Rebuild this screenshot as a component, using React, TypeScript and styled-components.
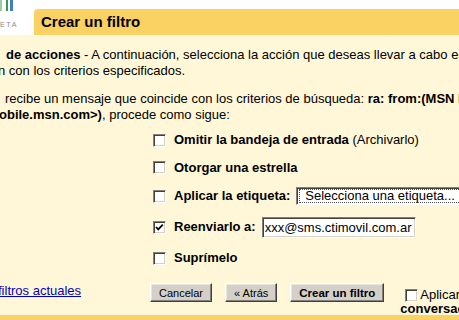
import styled, { createGlobalStyle } from 'styled-components'

const GlobalStyle = createGlobalStyle`
  html, body {
    margin: 0;
    padding: 0;
    background: #fff;
  }
  body {
    font-family: "Liberation Sans", Arial, sans-serif;
    font-size: 13px;
    color: #000;
  }
`

function Checkbox({ checked = false }: { checked?: boolean }) {
  return (
    <Box>
      {checked && (
        <svg width="9" height="9" viewBox="0 0 9 9">
          <path d="M1 4 L3.2 6.4 L7.8 1.6" fill="none" stroke="#000" strokeWidth="1.7" />
        </svg>
      )}
    </Box>
  )
}

export default function App() {
  return (
    <>
      <GlobalStyle />
      <Page>
        <TopBar>
          <LogoCell>
            <svg width="14" height="11" viewBox="0 0 14 11">
              <rect x="0" y="0" width="2" height="11" fill="#9cc9a8" />
              <rect x="6" y="0" width="2" height="11" fill="#3a9a4c" />
              <rect x="10" y="0" width="3" height="11" fill="#3d7fc4" />
            </svg>
            <BetaText>ETA</BetaText>
          </LogoCell>
          <Tab>Crear un filtro</Tab>
        </TopBar>

        <Panel>
          <Para>
            <Line $indent={6}>
              <b>de acciones</b> - A continuación, selecciona la acción que deseas llevar a cabo en los mensajes que
            </Line>
            <Line $indent={-2}>n con los criterios especificados.</Line>
          </Para>
          <Para>
            <Line $indent={5}>
              recibe un mensaje que coincide con los criterios de búsqueda: <b>ra: from:(MSN Mobile</b>
            </Line>
            <Line $indent={-1}>
              <b>obile.msn.com&gt;)</b>, procede como sigue:
            </Line>
          </Para>

          <ActionList>
            <ActionRow $h={28}>
              <Checkbox />
              <Label>
                <b>Omitir la bandeja de entrada</b> (Archivarlo)
              </Label>
            </ActionRow>
            <ActionRow $h={27}>
              <Checkbox />
              <Label>
                <b>Otorgar una estrella</b>
              </Label>
            </ActionRow>
            <ActionRow $h={30}>
              <Checkbox />
              <Label>
                <b>Aplicar la etiqueta:</b>
              </Label>
              <FakeSelect>
                <SelectText>Selecciona una etiqueta...</SelectText>
              </FakeSelect>
            </ActionRow>
            <ActionRow $h={32}>
              <Checkbox checked />
              <Label>
                <b>Reenviarlo a:</b>
              </Label>
              <TextInput readOnly value="xxx@sms.ctimovil.com.ar" />
            </ActionRow>
            <ActionRow $h={30}>
              <Checkbox />
              <Label>
                <b>Suprímelo</b>
              </Label>
            </ActionRow>
          </ActionList>

          <Footer>
            <LinkCell>
              <FilterLink href="#">filtros actuales</FilterLink>
            </LinkCell>
            <Buttons>
              <Btn>Cancelar</Btn>
              <Btn>« Atrás</Btn>
              <Btn $primary>Crear un filtro</Btn>
            </Buttons>
            <ApplyBlock>
              <ApplyLine>
                <Checkbox />
                <span>Aplicar el filtro también a las</span>
              </ApplyLine>
              <b>conversaciones que coinciden.</b>
            </ApplyBlock>
          </Footer>
        </Panel>
      </Page>
    </>
  )
}

const Page = styled.div`
  width: 459px;
  height: 320px;
  overflow: hidden;
`

const TopBar = styled.div`
  display: flex;
  height: 35px;
`

const LogoCell = styled.div`
  width: 34px;
  display: flex;
  flex-direction: column;
  svg {
    display: block;
  }
`

const BetaText = styled.div`
  margin-top: 10px;
  font-size: 7px;
  line-height: 7px;
  letter-spacing: 1.6px;
  color: #8a8a8a;
`

const Tab = styled.div`
  flex: 1;
  margin-top: 9px;
  height: 26px;
  background: #fad163;
  border-top-left-radius: 4px;
  padding-left: 7px;
  font-size: 15px;
  font-weight: bold;
  line-height: 26px;
`

const Panel = styled.div`
  height: 268px;
  padding-top: 12px;
  background: #fff7d7;
  border-bottom: 6px solid #fad163;
`

const Para = styled.div`
  & + & {
    margin-top: 12px;
  }
`

const Line = styled.div<{ $indent: number }>`
  margin-left: ${({ $indent }) => $indent}px;
  white-space: nowrap;
  line-height: 16px;
`

const ActionList = styled.div`
  margin-top: 3px;
  padding-left: 153px;
`

const ActionRow = styled.div<{ $h: number }>`
  height: ${({ $h }) => $h}px;
  display: flex;
  align-items: center;
  white-space: nowrap;
`

const Box = styled.span`
  box-sizing: border-box;
  width: 13px;
  height: 13px;
  flex: none;
  display: inline-flex;
  align-items: center;
  justify-content: center;
  background: #fff;
  border-style: solid;
  border-width: 1px;
  border-color: #808080 #fff #fff #808080;
  box-shadow: inset 1px 1px #404040, inset -1px -1px #d4d0c8;
`

const Label = styled.span`
  margin-left: 8px;
  line-height: 16px;
`

const FakeSelect = styled.div`
  box-sizing: border-box;
  margin-left: 6px;
  width: 200px;
  height: 18px;
  flex: none;
  display: flex;
  padding: 1px 0 1px 2px;
  background: #fff;
  border-style: solid;
  border-width: 1px;
  border-color: #808080 #fff #fff #808080;
  box-shadow: inset 1px 1px #404040;
`

const SelectText = styled.span`
  flex: 1;
  border: 1px dotted #555;
  padding-left: 5px;
  line-height: 12px;
  font-size: 13px;
`

const TextInput = styled.input`
  box-sizing: border-box;
  margin-left: 6px;
  width: 154px;
  height: 21px;
  padding: 0 2px;
  font-family: "Liberation Sans", Arial, sans-serif;
  font-size: 13px;
  color: #000;
  background: #fff;
  outline: none;
  border-style: solid;
  border-width: 1px;
  border-color: #808080 #fff #fff #808080;
  box-shadow: inset 1px 1px #404040, inset -1px -1px #d4d0c8;
`

const Footer = styled.div`
  margin-top: 10px;
  display: flex;
  align-items: flex-start;
  white-space: nowrap;
`

const LinkCell = styled.div`
  width: 150px;
  flex: none;
  line-height: 16px;
`

const FilterLink = styled.a`
  margin-left: -2px;
  color: #0000cc;
  text-decoration: underline;
`

const Buttons = styled.div`
  display: flex;
  gap: 13px;
  flex: none;
`

const Btn = styled.button<{ $primary?: boolean }>`
  height: 19px;
  padding: 0 8px;
  font-family: "Liberation Sans", Arial, sans-serif;
  font-size: ${({ $primary }) => ($primary ? '11.5px' : '11px')};
  font-weight: ${({ $primary }) => ($primary ? 'bold' : 'normal')};
  color: #000;
  background: #d4d0c8;
  border-style: solid;
  border-width: 1px;
  border-color: #fff #404040 #404040 #fff;
  box-shadow: inset -1px -1px #808080, inset 1px 1px #e8e6e1;
  border-radius: 0;
`

const ApplyBlock = styled.div`
  flex: none;
  margin-left: 16px;
  margin-top: 5px;
  line-height: 14px;
`

const ApplyLine = styled.div`
  display: flex;
  align-items: center;
  gap: 2px;
  height: 14px;
  ${Box} {
    margin-left: 5px;
  }
`
